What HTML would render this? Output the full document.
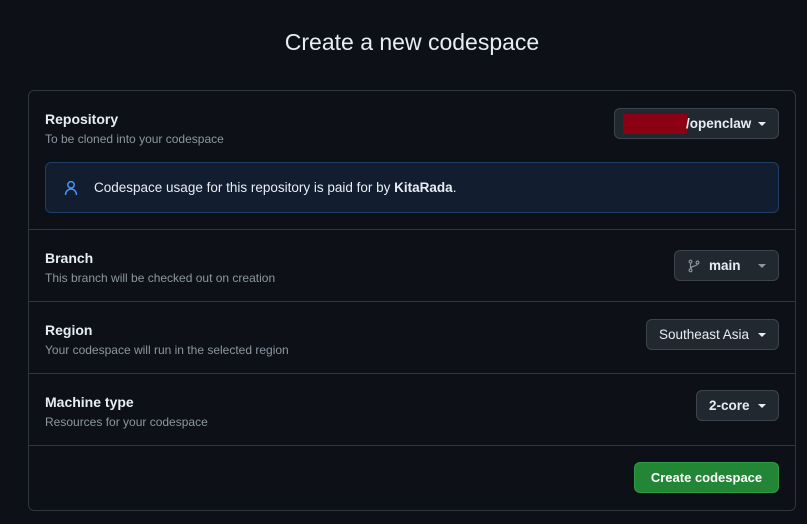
<!DOCTYPE html>
<html><head><style>
*{box-sizing:border-box;margin:0;padding:0}
body{width:807px;height:524px;background:#0d1117;font-family:"Liberation Sans",sans-serif;color:#e6edf3;position:relative;overflow:hidden}
h1{position:absolute;top:29px;left:0;width:824px;text-align:center;font-weight:400;font-size:23px;color:#e6edf3}
.box{position:absolute;left:28px;top:90px;width:768px;height:421px;border:1px solid #30363d;border-radius:6px}
.t{position:absolute;left:16px;font-weight:700;font-size:14px;color:#e6edf3}
.s{position:absolute;left:16px;font-size:12px;color:#8d96a0}
.hr{position:absolute;left:0;right:0;height:1px;background:#30363d}
.btn{position:absolute;right:16px;height:31px;border:1px solid #3d444d;border-radius:6px;background:#212830;font-weight:700;font-size:13.5px;display:flex;align-items:center;padding:0 12px;gap:8px;color:#e6edf3;white-space:nowrap}
.car{width:0;height:0;border-left:4px solid transparent;border-right:4px solid transparent;border-top:4px solid #e6edf3;margin-left:auto}
.info{position:absolute;left:16px;right:16px;top:71px;height:51px;border:1px solid #1f3e66;background:#121d2f;border-radius:6px;font-size:13.5px;display:flex;align-items:center;padding-left:17px;white-space:nowrap}
</style></head><body>
<h1>Create a new codespace</h1>
<div class="box">
<div class="t" style="top:20px">Repository</div>
<div class="s" style="top:41px">To be cloned into your codespace</div>
<div class="btn" style="top:17px;width:165px;padding-left:8px;gap:0"><span style="display:inline-block;width:64px;height:20px;background:#8b0012;margin-right:-1px"></span>/openclaw<span class="car"></span></div>
<div class="info"><svg width="16" height="16" viewBox="0 0 16 16" fill="none" stroke="#4493f8" stroke-width="1.5"><circle cx="8" cy="4.8" r="3.2"/><path d="M2.5 15c0-3.5 2.5-6 5.5-6s5.5 2.5 5.5 6"/></svg><span style="margin-left:15px">Codespace usage for this repository is paid for by <b>KitaRada</b>.</span></div>
<div class="hr" style="top:138px"></div>
<div class="t" style="top:159px">Branch</div>
<div class="s" style="top:180px">This branch will be checked out on creation</div>
<div class="btn" style="top:159px;width:105px"><svg width="14" height="16" viewBox="0 0 16 16" fill="none" stroke="#8d96a0" stroke-width="1.3"><circle cx="4" cy="3" r="1.6"/><circle cx="4" cy="13" r="1.6"/><circle cx="12" cy="4" r="1.6"/><path d="M4 4.6v6.8M12 5.6c0 3-8 2-8 5.8"/></svg>main<span class="car" style="border-top-color:#8d96a0"></span></div>
<div class="hr" style="top:210px"></div>
<div class="t" style="top:231px">Region</div>
<div class="s" style="top:252px">Your codespace will run in the selected region</div>
<div class="btn" style="top:228px;width:133px;font-weight:400">Southeast Asia<span class="car"></span></div>
<div class="hr" style="top:282px"></div>
<div class="t" style="top:303px">Machine type</div>
<div class="s" style="top:324px">Resources for your codespace</div>
<div class="btn" style="top:299px;width:83px">2-core<span class="car"></span></div>
<div class="hr" style="top:354px"></div>
<div class="btn" style="top:371px;width:145px;background:#238636;border-color:#2f9a45;justify-content:center;color:#fff;font-size:13px">Create codespace</div>
</div>
</body></html>
